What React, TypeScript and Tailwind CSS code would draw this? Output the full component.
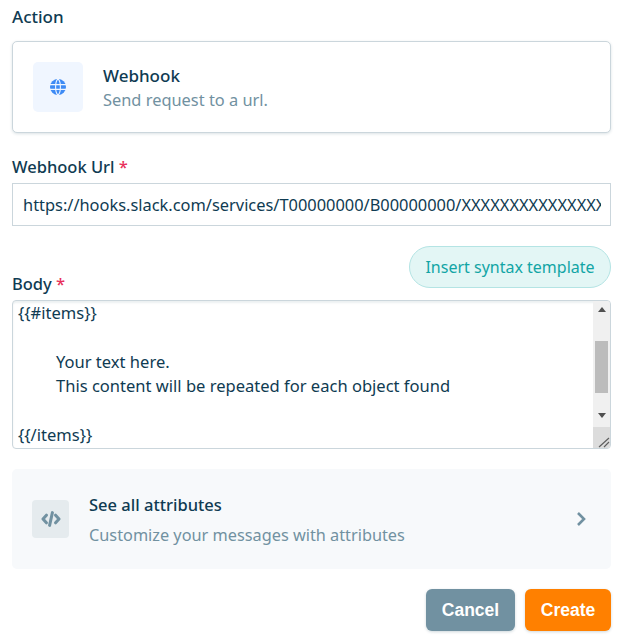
import React from "react";

const navy = "text-[#0f3b52]";

function Globe() {
  return (
    <svg width="16" height="16" viewBox="0 0 16 16" aria-hidden="true">
      <circle cx="8" cy="8" r="8" fill="#3e8bf5" />
      <path d="M0 5.6h16M0 10.4h16M8 0C4.8 2.5 4.8 13.5 8 16M8 0c3.2 2.5 3.2 13.5 0 16" fill="none" stroke="#f0f6ff" strokeWidth="1.1" />
    </svg>
  );
}

function Code() {
  return (
    <svg width="20" height="16" viewBox="0 0 20 16" fill="none" stroke="#7191a1" strokeWidth="3" aria-hidden="true">
      <path d="M5.4 4.2 2 8l3.4 3.8M14.6 4.2 18 8l-3.4 3.8" strokeLinecap="round" strokeLinejoin="round" />
      <path d="M11.4 1.6 8.6 14.4" strokeLinecap="round" />
    </svg>
  );
}

function Scrollbar() {
  return (
    <div className="w-[17px] shrink-0 flex flex-col bg-[#f0f0f0]">
      <div className="h-[17px] flex items-center justify-center">
        <div className="w-0 h-0 border-x-[4.5px] border-x-transparent border-b-[5px] border-b-[#505050]" />
      </div>
      <div className="h-[23px]" />
      <div className="h-[52px] mx-[2px] bg-[#bcbcbc]" />
      <div className="flex-1 flex items-end justify-center pb-[9px]">
        <div className="w-0 h-0 border-x-[4.5px] border-x-transparent border-t-[5px] border-t-[#505050]" />
      </div>
      <div className="h-[21px] bg-[#dcdcdc] relative overflow-hidden">
        <svg className="absolute right-0 bottom-0" width="13" height="13" viewBox="0 0 13 13" fill="none" stroke="#606060" strokeWidth="1.2">
          <path d="M2 12 12 3M7 12l5-5" />
        </svg>
      </div>
    </div>
  );
}

export default function App() {
  return (
    <div className="w-[624px] h-[642px] bg-white px-3 pt-[5px] font-['Noto_Sans','Open_Sans',sans-serif] overflow-hidden">
      <div className={`text-[17px] leading-[24px] font-medium ${navy}`}>Action</div>

      <div className="mt-3 h-[92px] w-[599px] rounded-[5px] border border-[#cbd6dc] shadow-[0_1px_3px_rgba(15,59,82,0.15)] flex items-center pl-[20px] gap-5 bg-white">
        <div className="w-[50px] h-[50px] rounded-[5px] bg-[#f0f6ff] flex items-center justify-center">
          <Globe />
        </div>
        <div className="pt-[2px]">
          <div className={`text-[17px] leading-[24px] font-medium ${navy}`}>Webhook</div>
          <div className="text-[16.4px] leading-[24px] text-[#7191a1]">Send request to a url.</div>
        </div>
      </div>

      <div className={`mt-[22px] text-[16.5px] leading-[24px] font-medium ${navy}`}>
        Webhook Url <span className="text-[#e8305a]">*</span>
      </div>
      <input
        readOnly
        value="https://hooks.slack.com/services/T00000000/B00000000/XXXXXXXXXXXXXXXXXXXXXXXX"
        className={`block mt-[4px] h-[43px] w-[599px] border border-[#cbd6dc] bg-white pl-[10px] pr-[9px] text-[16.4px] outline-none ${navy}`}
      />

      <div className="mt-[20px] h-[42px] w-[599px] flex justify-between items-end">
        <div className={`text-[16.5px] leading-[24px] font-medium translate-y-[8px] ${navy}`}>
          Body <span className="text-[#e8305a]">*</span>
        </div>
        <div className="h-[42px] w-[202px] rounded-full border border-[#b4e4e4] bg-[#e3f6f5] text-[#12a5a5] text-[16px] flex items-center justify-center">
          Insert syntax template
        </div>
      </div>

      <div className="mt-3 h-[149px] w-[599px] rounded-[4px] border border-[#cbd6dc] shadow-[inset_0_2px_2px_rgba(15,59,82,0.08)] flex overflow-hidden">
        <div className={`flex-1 pl-[5px] text-[16.55px] leading-[24.4px] ${navy}`}>
          <div>{"{{#items}}"}</div>
          <div className="h-[24.4px]" />
          <div className="pl-[38px]">Your text here.</div>
          <div className="pl-[38px]">This content will be repeated for each object found</div>
          <div className="h-[24.4px]" />
          <div>{"{{/items}}"}</div>
        </div>
        <Scrollbar />
      </div>

      <div className="mt-[20px] h-[100px] w-[599px] rounded-[5px] bg-[#f7f9fb] flex items-center pl-5 pr-[24px]">
        <div className="w-[37px] h-[38px] rounded-[4px] bg-[#e5ebee] flex items-center justify-center">
          <Code />
        </div>
        <div className="ml-5 flex-1 pt-[2px]">
          <div className={`text-[16.5px] leading-[24px] font-medium ${navy}`}>See all attributes</div>
          <div className="mt-[6px] text-[16.3px] leading-[24px] text-[#7191a1]">Customize your messages with attributes</div>
        </div>
        <svg width="12" height="16" viewBox="0 0 12 16" fill="none" stroke="#7191a1" strokeWidth="2.6" aria-hidden="true">
          <path d="m3 2 6 6-6 6" />
        </svg>
      </div>

      <div className="mt-5 w-[599px] flex justify-end gap-[10px] font-['Liberation_Sans',sans-serif]">
        <div className="w-[89px] h-[42px] rounded-[6px] bg-[#7191a1] text-white font-bold text-[17.5px] flex items-center justify-center shadow-[0_1px_3px_rgba(15,59,82,0.2)]">Cancel</div>
        <div className="w-[86px] h-[42px] rounded-[6px] bg-[#ff8000] text-white font-bold text-[17.5px] flex items-center justify-center shadow-[0_1px_3px_rgba(15,59,82,0.2)]">Create</div>
      </div>
    </div>
  );
}
